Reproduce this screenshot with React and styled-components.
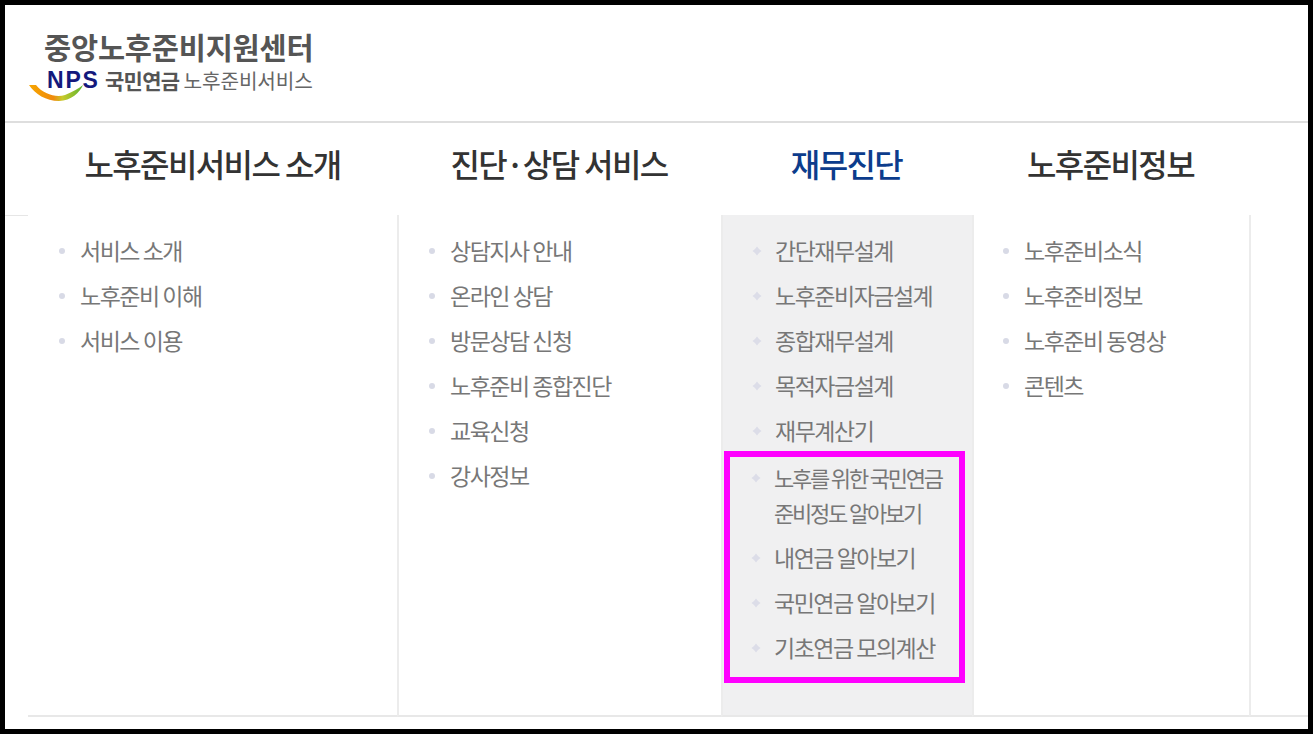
import { createGlobalStyle, styled } from 'styled-components'

const GlobalStyle = createGlobalStyle`
	html, body {
		margin: 0;
		padding: 0;
		background: #000;
	}
	* {
		box-sizing: border-box;
	}
`

const Frame = styled.div`
	width: 1313px;
	height: 734px;
	border: 5px solid #000;
	background: #fff;
	overflow: hidden;
	font-family: "Noto Sans CJK KR", "Noto Sans", sans-serif;
`

const Header = styled.header`
	height: 118px;
	border-bottom: 2px solid #dedede;
	padding: 24px 0 0 24px;
`

const CenterName = styled.div`
	margin-left: 15px;
	height: 35px;
	font-size: 29.5px;
	line-height: 35px;
	font-weight: 700;
	letter-spacing: -0.2px;
	color: #555;
`

const LogoRow = styled.div`
	display: flex;
	align-items: flex-start;
	height: 38px;
`

const Swoosh = styled.svg`
	width: 58px;
	height: 17px;
	flex: none;
	margin: 21px -40px 0 0;
`

const Nps = styled.span`
	width: 58px;
	margin-top: 3px;
	flex: none;
	font-family: "Liberation Sans", sans-serif;
	font-size: 23px;
	line-height: 26px;
	font-weight: 700;
	letter-spacing: 1.8px;
	color: #14197c;
`

const Pension = styled.span`
	font-size: 21px;
	line-height: 33px;
	font-weight: 700;
	letter-spacing: -0.7px;
	color: #555;
`

const ServiceName = styled.span`
	margin-left: 4px;
	font-size: 20.2px;
	line-height: 33px;
	font-weight: 400;
	letter-spacing: -0.1px;
	color: #666;
`

const Menu = styled.nav`
	display: flex;
	height: 596px;
`

const Gutter = styled.div`
	width: 23px;
	height: 93px;
	border-bottom: 1px solid #e6e6e6;
`

const Column = styled.section`
	width: ${({ $width }) => $width}px;
	flex: none;
`

const Tail = styled.div`
	flex: 1;
	margin-top: 92px;
	height: 502px;
	border-left: 2px solid #ececec;
	border-bottom: 2px solid #e8e8e8;
`

const Title = styled.h2`
	height: 92px;
	margin: 0;
	text-align: center;
	font-size: 32px;
	line-height: 80px;
	font-weight: 500;
	letter-spacing: -1.6px;
	color: ${({ $active }) => ($active ? '#0c3c8c' : '#333')};
`

const Panel = styled.div`
	height: 502px;
	padding-top: 18px;
	border-bottom: 2px solid #e8e8e8;
	border-left: ${({ $ruled }) => ($ruled ? '2px solid #ececec' : '0')};
	background: ${({ $active }) => ($active ? '#f0f0f1' : 'transparent')};
`

const List = styled.ul`
	margin: 0;
	padding: 0 0 0 ${({ $inset }) => $inset}px;
	list-style: none;
`

const Item = styled.li`
	display: flex;
	gap: 15px;
	margin-bottom: 10px;
	font-size: ${({ $tight }) => ($tight ? '22px' : '23px')};
	line-height: 35px;
	letter-spacing: ${({ $tight }) => ($tight ? '-2.2px' : '-1.5px')};
	color: #777;
`

const Bullet = styled.span`
	flex: none;
	width: 6px;
	height: 6px;
	margin-top: 15px;
	border-radius: 50%;
	background: #d8dae6;
`

const Sparkle = styled.svg`
	flex: none;
	width: 10px;
	height: 10px;
	margin: 13px -2px 0 -2px;
	fill: #dcdde8;
`

const HighlightBox = styled.div`
	width: 241px;
	margin: -7px 0 0 1px;
	padding: 3px 0 2px 23px;
	border: 6px solid #ff00ff;
`

const columns = [
	{
		title: '노후준비서비스 소개',
		width: 369,
		inset: 31,
		items: ['서비스 소개', '노후준비 이해', '서비스 이용'],
	},
	{
		title: '진단·상담 서비스',
		width: 324,
		inset: 30,
		ruled: true,
		items: ['상담지사 안내', '온라인 상담', '방문상담 신청', '노후준비 종합진단', '교육신청', '강사정보'],
	},
	{
		title: '재무진단',
		width: 251,
		inset: 31,
		ruled: true,
		active: true,
		items: ['간단재무설계', '노후준비자금설계', '종합재무설계', '목적자금설계', '재무계산기'],
		highlighted: ['노후를 위한 국민연금 준비정도 알아보기', '내연금 알아보기', '국민연금 알아보기', '기초연금 모의계산'],
	},
	{
		title: '노후준비정보',
		width: 277,
		inset: 29,
		ruled: true,
		items: ['노후준비소식', '노후준비정보', '노후준비 동영상', '콘텐츠'],
	},
]

function Marker({ active }) {
	if (!active) return <Bullet />
	return (
		<Sparkle viewBox="0 0 10 10">
			<path d="M5 0.5 L7 3 L9.5 5 L7 7 L5 9.5 L3 7 L0.5 5 L3 3 Z" />
		</Sparkle>
	)
}

function MenuColumn({ column }) {
	const { title, width, inset, ruled, active, items, highlighted } = column
	return (
		<Column $width={width}>
			<Title $active={active}>{title}</Title>
			<Panel $ruled={ruled} $active={active}>
				<List $inset={inset}>
					{items.map((item) => (
						<Item key={item}>
							<Marker active={active} />
							<span>{item}</span>
						</Item>
					))}
				</List>
				{highlighted && (
					<HighlightBox>
						<List $inset={0}>
							{highlighted.map((item) => (
								<Item key={item} $tight={item.length > 12}>
									<Marker active={active} />
									<span>{item}</span>
								</Item>
							))}
						</List>
					</HighlightBox>
				)}
			</Panel>
		</Column>
	)
}

export default function App() {
	return (
		<>
			<GlobalStyle />
			<Frame>
				<Header>
					<CenterName>중앙노후준비지원센터</CenterName>
					<LogoRow>
						<Swoosh viewBox="0 11 58 17">
							<defs>
								<linearGradient id="swoosh" x1="0" x2="1" y1="0" y2="0">
									<stop offset="0" stopColor="#f7a600" />
									<stop offset="0.45" stopColor="#ef8a0c" />
									<stop offset="0.62" stopColor="#c7c92a" />
									<stop offset="1" stopColor="#5cb531" />
								</linearGradient>
							</defs>
							<path d="M0 11 L7 11 C14 20 27 24 36 21 C44 18 50 14 54 11 C51 18 42 27 30 27 C17 27 6 20 0 11 Z" fill="url(#swoosh)" />
						</Swoosh>
						<Nps>NPS</Nps>
						<Pension>국민연금</Pension>
						<ServiceName>노후준비서비스</ServiceName>
					</LogoRow>
				</Header>
				<Menu>
					<Gutter />
					{columns.map((column) => (
						<MenuColumn key={column.title} column={column} />
					))}
					<Tail />
				</Menu>
			</Frame>
		</>
	)
}
